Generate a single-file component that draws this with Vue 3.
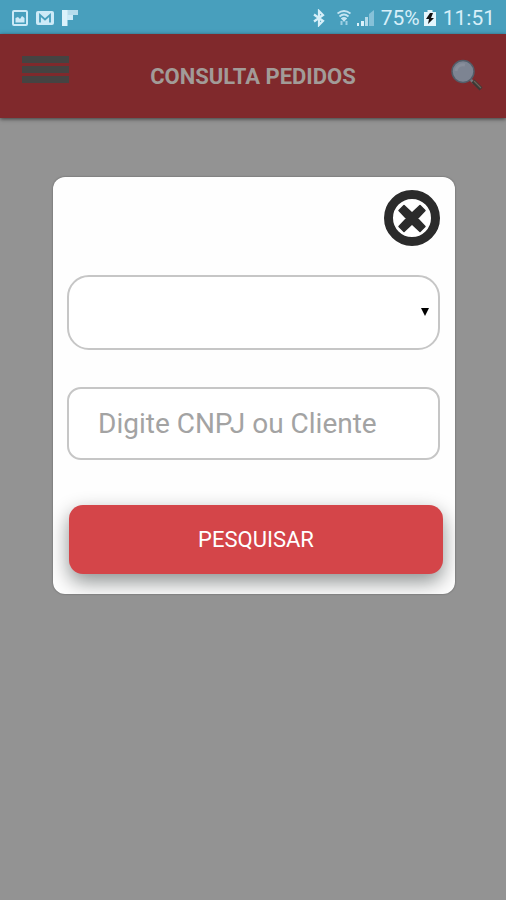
<template>
  <div class="screen">
    <div class="status-bar">
      <div class="status-icons">
        <svg class="status-icon" viewBox="0 0 16 18">
          <rect x="1" y="2" width="14" height="14" rx="1" fill="none" stroke="#cdeaf7" stroke-width="2" />
          <path d="M3.500 13.500V9l2.500-1 2 2 2-3 2.500 2v4.500z" fill="#cdeaf7" />
        </svg>
        <svg class="status-icon wide" viewBox="0 0 18 18">
          <rect x="0" y="2" width="18" height="14" rx="2" fill="#cdeaf7" />
          <path d="M4 13.500V6l5 4.500L14 6v7.500" fill="none" stroke="#489fbd" stroke-width="1.800" />
        </svg>
        <svg class="status-icon" viewBox="0 0 16 18">
          <path d="M0 1h16v5H0z" fill="#b6dcec" />
          <path d="M0 1h5.500v16H0z" fill="#dcf2fb" />
          <path d="M5 6h6v5H5z" fill="#cdeaf7" />
        </svg>
      </div>
      <div class="status-info">
        <svg class="bluetooth" viewBox="0 0 12 18">
          <path d="M1 5.500l9 6.500-4 4V2l4 4-9 6.500" fill="none" stroke="#d7eff9" stroke-width="2.200" />
        </svg>
        <svg class="wifi" viewBox="0 0 14 18">
          <g fill="none" stroke="#c5e5f2" stroke-width="1.800">
            <path d="M0.500 4.500Q7 -0.500 13.500 4.500" />
            <path d="M2.500 7.500Q7 3.500 11.500 7.500" />
            <path d="M4.500 10Q7 8 9.500 10" />
          </g>
          <path d="M4 9h6l-3 4z" fill="#c5e5f2" />
          <path d="M4.500 12v4M9.500 12v4" stroke="#9ed0e4" stroke-width="2" />
        </svg>
        <svg class="signal" viewBox="0 0 17 18">
          <path d="M0 14h2v3H0zM4 12h3v5H4z" fill="#dcf2fb" />
          <path d="M8 8h3v9H8z" fill="#b5dbea" />
          <path d="M12 5l5-4v16h-5z" fill="#86c1d8" />
        </svg>
        <span class="battery-level">75%</span>
        <svg class="battery" viewBox="0 0 12 18">
          <path d="M3.500 1h5v2H12v14H0V3h3.500z" fill="#e4f5fc" />
          <path d="M6 4L2 10h3l-1 5 6-6H7l2-5z" fill="#111" />
        </svg>
        <span class="clock">11:51</span>
      </div>
    </div>

    <header class="header">
      <button class="menu-button" type="button" aria-label="Menu">
        <span></span>
        <span></span>
        <span></span>
      </button>
      <h1>CONSULTA PEDIDOS</h1>
      <button class="search-button" type="button" aria-label="Buscar" @click="open = true">
        <svg viewBox="0 0 34 34">
          <path d="M20 20l4 4" stroke="#75797f" stroke-width="2.500" />
          <path d="M23 22l8 8" stroke="#3c3937" stroke-width="4" />
          <path d="M24 22l7 7" stroke="#6f6258" stroke-width="1.200" />
          <circle cx="13" cy="12.500" r="11" fill="#7d8492" stroke="#535d69" stroke-width="1.500" />
          <path d="M6 12a7 7 0 0 1 9-6" fill="none" stroke="#888e9b" stroke-width="3" />
        </svg>
      </button>
    </header>

    <form v-if="open" class="modal" @submit.prevent="search">
      <button class="close-button" type="button" aria-label="Fechar" @click="open = false">
        <svg viewBox="0 0 56 56">
          <circle cx="28" cy="28" r="23.500" fill="#fff" stroke="#2b2b2b" stroke-width="9" />
          <path
            d="M20 15.500l8 7.500 8-7.500 5 5-7.500 8 7.500 8-5 5-8-7.500-8 7.500-5-5 7.500-8-7.500-8z"
            fill="#2b2b2b"
            stroke="#2b2b2b"
            stroke-width="1.500"
            stroke-linejoin="round"
          />
        </svg>
      </button>

      <div class="select-box">
        <select v-model="filter" aria-label="Filtro">
          <option v-for="f in filters" :key="f" :value="f">{{ f }}</option>
        </select>
        <svg class="arrow" viewBox="0 0 8 8"><path d="M0 0h8L4 8z" /></svg>
      </div>

      <input v-model="term" class="term" type="text" placeholder="Digite CNPJ ou Cliente" aria-label="CNPJ ou Cliente" />

      <button class="submit-button" type="submit">PESQUISAR</button>
    </form>
  </div>
</template>

<script setup>
import { ref } from 'vue'

const open = ref(true)
const filters = ref([''])
const filter = ref('')
const term = ref('')

const emit = defineEmits(['search'])
const search = () => {
  emit('search', { filter: filter.value, term: term.value })
}
</script>

<style>
body {
  margin: 0;
  background: #939393;
}
</style>

<style scoped>
.screen {
  min-height: 100vh;
  background: #939393;
  font-family: Roboto, sans-serif;
}

button {
  padding: 0;
  border: none;
  background: none;
  font-family: inherit;
  cursor: pointer;
}

svg {
  display: block;
}

.status-bar {
  display: flex;
  align-items: center;
  justify-content: space-between;
  box-sizing: border-box;
  height: 34px;
  padding: 2px 11px 0 12px;
  background: #489fbd;
  color: #d7eff9;
}
.status-icons {
  display: flex;
  gap: 8px;
}
.status-icon {
  width: 16px;
  height: 18px;
}
.status-icon.wide {
  width: 18px;
}
.status-info {
  display: flex;
  align-items: center;
  font-size: 21px;
}
.bluetooth {
  width: 12px;
  height: 18px;
  margin-right: 12px;
}
.wifi {
  width: 14px;
  height: 18px;
  margin-right: 6px;
}
.signal {
  width: 17px;
  height: 18px;
  margin-right: 7px;
}
.battery {
  width: 12px;
  height: 18px;
  margin: 0 7px 0 4px;
}

.header {
  display: grid;
  grid-template-columns: 1fr auto 1fr;
  align-items: center;
  box-sizing: border-box;
  height: 84px;
  padding: 0 22px;
  background: #80292c;
  box-shadow: 0 1px 4px rgba(0, 0, 0, 0.6);
}
.header h1 {
  margin: 0;
  color: #a29b98;
  font-size: 22px;
  font-weight: 700;
}
.menu-button {
  display: flex;
  flex-direction: column;
  gap: 3px;
  width: 47px;
  padding-bottom: 13px;
}
.menu-button span {
  height: 7px;
  background: #454342;
}
.search-button {
  justify-self: end;
}
.search-button svg {
  width: 34px;
  height: 34px;
}

.modal {
  display: flex;
  flex-direction: column;
  margin: 59px 51px 0 53px;
  padding-bottom: 20px;
  border-radius: 12px;
  background: #fefefe;
  box-shadow: 0 0 2px rgba(0, 0, 0, 0.4);
  overflow: hidden;
}
.close-button {
  align-self: flex-end;
  margin: 13px 15px 0 0;
}
.close-button svg {
  width: 56px;
  height: 56px;
}
.select-box {
  position: relative;
  margin: 29px 15px 37px 14px;
}
.select-box select {
  display: block;
  box-sizing: border-box;
  width: 100%;
  height: 75px;
  padding: 0 30px;
  border: 2px solid #c6c6c6;
  border-radius: 22px;
  background: #fff;
  font-family: inherit;
  font-size: 28px;
  appearance: none;
}
.arrow {
  position: absolute;
  top: 33px;
  right: 11px;
  width: 8px;
  height: 8px;
  pointer-events: none;
}
.term {
  box-sizing: border-box;
  height: 73px;
  margin: 0 15px 45px 14px;
  padding: 0 29px;
  border: 2px solid #c6c6c6;
  border-radius: 14px;
  background: #fff;
  font-family: inherit;
  font-size: 28px;
}
.term::placeholder {
  color: #a3a3a3;
}
.submit-button {
  height: 69px;
  margin: 0 12px 0 16px;
  border-radius: 14px;
  background: #d44549;
  box-shadow: 0 8px 20px rgba(0, 10, 10, 0.45);
  color: #fff;
  font-size: 22px;
}
</style>
